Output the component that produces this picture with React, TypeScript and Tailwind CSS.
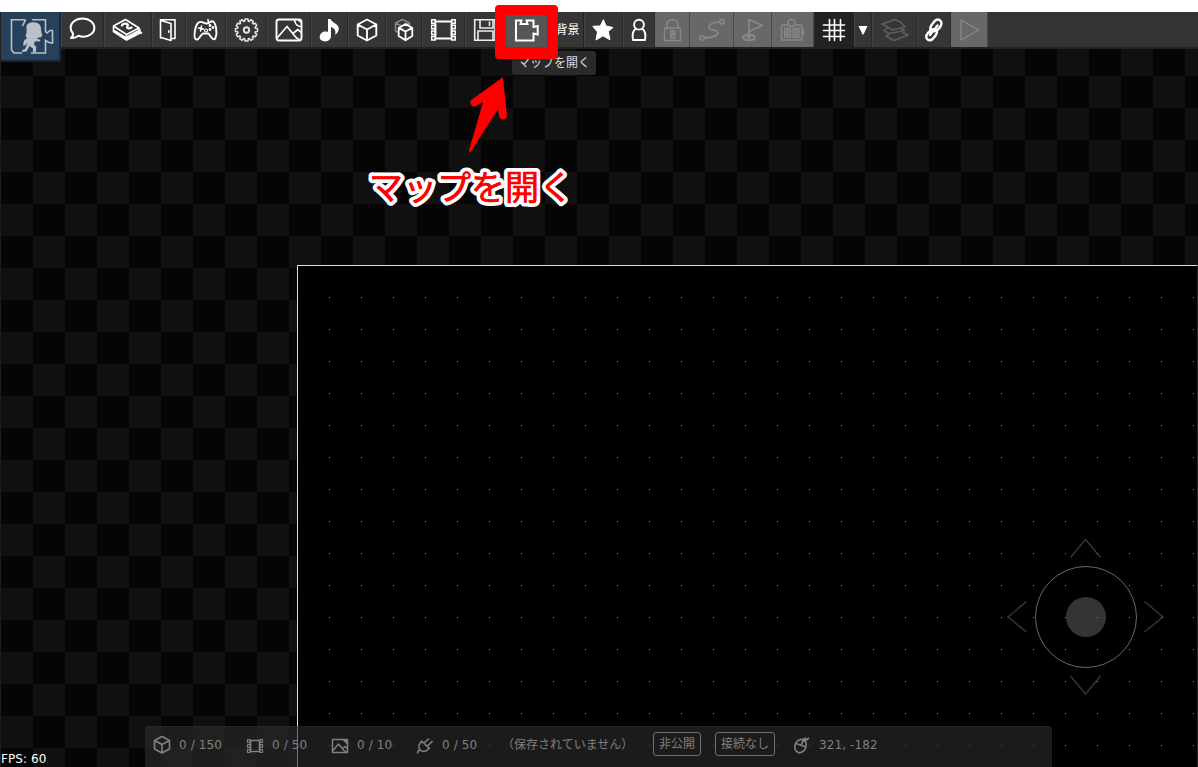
import type { ReactNode } from "react";

type ToolProps = { x: number; w: number; tone?: string; stroke?: string; children?: ReactNode };

const dark = "bg-[#363636] border-l-[#434343] border-r-[#292929]";
const off = "bg-[#686868] border-l-[#686868] border-r-[#484848]";
const active = "bg-[#222222] border-l-[#2a2a2a] border-r-[#222222]";

function Tool({ x, w, tone = dark, stroke = "#fff", children }: ToolProps) {
  return (
    <button className={`h-full shrink-0 border-x ${tone}`} style={{ width: w }}>
      <svg
        className="-ml-px block max-w-none"
        width={w}
        height={35}
        viewBox={`${x} 12 ${w} 35`}
        fill="none"
        stroke={stroke}
        strokeWidth={1.9}
        strokeLinejoin="round"
        strokeLinecap="round"
      >
        {children}
      </svg>
    </button>
  );
}

const gearOutline =
  Array.from({ length: 12 }, (_, tooth) =>
    [
      [-0.2, 9],
      [-0.13, 11.1],
      [0.13, 11.1],
      [0.2, 9],
    ]
      .map(([turn, r]) => {
        const a = (tooth / 12) * Math.PI * 2 + turn;
        return `${(246.5 + r * Math.cos(a)).toFixed(2)} ${(30 + r * Math.sin(a)).toFixed(2)}`;
      })
      .join("L"),
  )
    .join("L")
    .replace(/^/, "M") + "Z";

function Film() {
  return (
    <>
      <path d="M435.500 21.500H451.500M435.500 38.500H451.500M435.500 24V36M451.500 24V36" />
      <g strokeWidth={1.500} strokeLinejoin="miter">
        {[19.700, 25.300, 30.900, 36.500].map((y) => (
          <path key={y} d={`M431.700 ${y}h3.500v3.500h-3.500zM451.700 ${y}h3.500v3.500h-3.500z`} />
        ))}
      </g>
    </>
  );
}

function Toolbar() {
  return (
    <header className="flex h-[37px] shrink-0 border-b-2 border-[#222222] bg-[#333333] pl-[61px]">
      <Tool x={61} w={43}>
        <path strokeWidth={2} d="M71 38C73 36 73.300 34.500 73 33.500C69.500 29.500 69.800 24.500 74 21.300C78.500 17.600 86.500 17.600 91 21.300C95.500 25 95.500 31 91 34.200C87 37 82 37.200 78.500 35.800C76.500 37.500 73.500 38.200 71 38Z" />
      </Tool>
      <Tool x={104} w={48}>
        <path strokeWidth={1.700} d="M113.500 26L125.500 19.500L139 28L126.500 34.500ZM113.500 26V31.500L126.500 40L141 32.500M126.500 34.500V40M139 28V32L141.500 33M115 31L127 38.500L140 31.500M128 36.500L140 30" />
        <path strokeWidth={2.300} d="M122 25.500C123 22.500 129.500 23.500 127.500 26C126 28.500 129 29 131.500 27.500" />
      </Tool>
      <Tool x={152} w={34}>
        <path strokeWidth={1.600} d="M160.500 38V19.700H175V38.500H171.500M161 20.500L171 23.500V40.500L161 37.500" />
        <path strokeWidth={1.800} d="M168.800 31V32" />
      </Tool>
      <Tool x={186} w={40}>
        <path strokeWidth={1.900} d="M199 22.300C202 20.500 204 24 207 23.500C210 23 210.500 20.500 213 21.500C216 23 217.500 33 215.500 38C213.500 42 210.500 36 208.500 33.500H203C200 35 198.500 41.500 195.500 39C193.500 37 195 24 199 22.300Z" />
        <path strokeWidth={1.500} d="M208.500 23L208 19.500M201.500 26L200.500 31M198.500 28L203.500 29" />
        <circle cx={206} cy={30.500} r={1.500} strokeWidth={1.200} />
        <g fill="#fff" stroke="none">
          <circle cx={210} cy={25.500} r={1.400} />
          <circle cx={213} cy={27.500} r={1.400} />
          <circle cx={210} cy={29.500} r={1.400} />
        </g>
      </Tool>
      <Tool x={226} w={41} stroke="#e5e5e5">
        <path strokeWidth={1.500} d={gearOutline} />
        <circle cx={246.500} cy={30} r={2.700} />
      </Tool>
      <Tool x={267} w={44}>
        <rect x={276.500} y={19.500} width={25} height={21} rx={2.500} />
        <path d="M277.500 37.500L287 26.500L296 37.500L299 39.500M293.500 33L298 29.500L301.500 33M294.500 20C295 24 298 26.500 301.500 26.500M298.500 20L301 22" strokeWidth={1.700} />
      </Tool>
      <Tool x={311} w={37}>
        <path fill="#fff" stroke="none" d="M328 19H330.500C331 22 338 24 338.700 27.500C339.200 30.500 337.500 33.500 335 35C336.500 30.500 334 28 331 27V36C331 43 319.700 43 319.700 37C319.700 32.500 324.500 30.500 328 32Z" />
      </Tool>
      <Tool x={348} w={38}>
        <path d="M367 19.500L376.300 24.500V35.500L367 40.500L357.700 35.500V24.500ZM357.700 24.500L367 29.500L376.300 24.500M367 29.500V40.500" />
      </Tool>
      <Tool x={386} w={36}>
        <path stroke="#8a8a8a" strokeWidth={1.400} d="M402.500 19.500L409.500 23V31L402.500 34.500L395.500 31V23ZM395.500 23L402.500 26.500L409.500 23M402.500 26.500V34" />
        <path fill="#363636" strokeWidth={1.800} d="M405.500 24L412.300 28V36L405.500 40.300L398.700 36V28ZM398.700 28L405.500 31.500L412.300 28M405.500 31.500V40" />
      </Tool>
      <Tool x={422} w={43}>
        <Film />
      </Tool>
      <Tool x={465} w={40} stroke="#eeeeee">
        <path strokeWidth={1.600} strokeLinejoin="miter" d="M474.700 19.700H495V40.300H474.700ZM480 20V28H493V20M489.500 22V25.500M478 40V31H493V40" />
      </Tool>
      <Tool x={505} w={43} tone="bg-[#555555] border-l-[#292929] border-r-[#292929]">
        <path strokeWidth={2} strokeLinejoin="miter" strokeLinecap="butt" d="M516 20.500H521.500L520.500 24H527.500L526.500 20.500H533.500V27L537.700 26V34.500L533.500 33.500V40.500H516Z" />
      </Tool>
      <button className="flex h-full w-[36px] shrink-0 items-center justify-center border-r border-r-[#222222] bg-[#363636] pl-1 text-[12px] text-white">
        <span className="whitespace-nowrap">背景</span>
      </button>
      <Tool x={584} w={39}>
        <path fill="#fff" strokeWidth={1} d="M603.500 20L606 26L613 27.500L608.300 31.500L610 39.800L603 35.800L596 40L597.500 32L592.800 26.300L600 26Z" />
      </Tool>
      <Tool x={623} w={32}>
        <circle cx={639} cy={24.700} r={4.900} />
        <path d="M636 28.500C632.500 31 632.200 36 633 40H645C645.800 36 645.500 31 642 28.500" />
      </Tool>
      <Tool x={655} w={35} tone={off} stroke="#898989">
        <rect x={664.500} y={28} width={16} height={12.500} strokeWidth={1.300} />
        <path d="M667 27.500V24.500C667 18 678 18 678 24.500V27.500" strokeWidth={1.500} />
        <path d="M670.500 33C670.500 29.500 675 29.500 675 33L674 34.500L675 38H670.500L671.500 34.500ZM672.700 32V35" strokeWidth={1.400} />
      </Tool>
      <Tool x={690} w={44} tone={off} stroke="#898989">
        <circle cx={722} cy={21.700} r={2.300} strokeWidth={1.500} />
        <circle cx={702} cy={38} r={2.300} strokeWidth={1.500} />
        <path d="M719.500 22C713 22 708 25 709 28C710 31 718 29 718 33C717 37 710 37.500 704.500 38" strokeWidth={1.700} />
      </Tool>
      <Tool x={734} w={38} tone={off} stroke="#898989">
        <path d="M749 36V19.500L762.500 25.500L749 31.500" strokeWidth={1.700} />
        <ellipse cx={749} cy={37.500} rx={5.800} ry={2.700} />
        <circle cx={749} cy={37} r={1} />
      </Tool>
      <Tool x={772} w={42} tone={off} stroke="#898989">
        <rect x={781.500} y={25} width={20.500} height={15} rx={1.500} strokeWidth={1.500} />
        <circle cx={791.500} cy={22.700} r={3.500} strokeWidth={1.500} fill="#686868" />
        <path strokeWidth={1.300} d="M784.500 28.500H790.500V37H784.500ZM793 28.500H799V37H793ZM787.500 30V35.500M796 30V35.500M803.500 31V34" />
        <path strokeWidth={2.500} d="M786 31V35M789 31V35M795 31V35M798 31V35" opacity={0.500} />
      </Tool>
      <Tool x={814} w={40} tone={active}>
        <path strokeWidth={1.600} d="M829.500 19.500V40.500M834.500 19.500V40.500M840.500 19.500V40.500M823.500 25H844.500M823.500 30.500H844.500M823.500 36.500H844.500" />
      </Tool>
      <Tool x={854} w={18}>
        <path fill="#fff" stroke="none" d="M858.500 26H867.500L863.500 34.500H862.500Z" />
      </Tool>
      <Tool x={872} w={45} stroke="#5d5d5d">
        <path strokeWidth={1.600} d="M882 24L895 19.500L901 22.500L905 27L892 30L887 26.500ZM887 28L884 30.500L889 33.500L904.500 30.500L901 28.500M889 34.500L886 36L894 40.500L908 35L903 32.500" />
      </Tool>
      <Tool x={917} w={34}>
        <g strokeWidth={2.400}>
          <path d="M932 31C928.500 29 931 25.500 933.500 22.500C936 18.500 939 19 941 21.500C942.500 24 940.500 27 938 29.500C936 31.500 934 31.500 932 31M935 29L937.500 25.500" />
          <path d="M935 29.500C938.500 31.500 936.500 34.500 934 37.500C931.500 41 928.500 41 926.700 38.500C925.500 36 927.500 33 930 31C932 29 933.500 29 935 29.500M932.500 31.500L930 35" />
        </g>
      </Tool>
      <Tool x={951} w={37} tone={off} stroke="#898989">
        <path strokeWidth={1.300} d="M961 20V40L978.500 30Z" />
      </Tool>
    </header>
  );
}

function Logo() {
  return (
    <div className="absolute left-0 top-3 h-[50px] w-[61px] border-b-2 border-l border-r-2 border-b-[#162536] border-l-[#202020] border-r-[#182a3d] bg-[#27405b]">
      <svg width="58" height="48" viewBox="1 12 58 48" fill="none" stroke="#b9c0ca" strokeWidth="1.600">
        <path d="M25.500 19.800H11.500V50L14 53H22M25.500 19.800L22.500 26M32 19.800H45.500V31.500L47 33L50 30.500H52.500V43L49 42.500L45.500 40.500V53H31" />
        <g fill="#b9c0ca" stroke="none">
          <path d="M26.500 28C26 23.500 30 22 34 22.200C39.500 22.500 41.500 26 41 30.500L42.300 35.500L40.500 37.500L38 37.500L36.500 39.500L30 38L27 38L25.500 36L26.500 33Z" />
          <path d="M29.500 36L35.500 36L36 38.500L40.300 39.800L40 41.500L35 41.300L34 44.500L36.300 47L35.800 52.500L32.800 52.500L33 48.500L29.500 46L26.500 51.500L22 52L22.300 50L25 49L27.500 43L25 45.500L23 45.500L24 40.500L28 37.500Z" />
        </g>
      </svg>
    </div>
  );
}

function Stage() {
  return (
    <main className="flex flex-1 border-l border-l-[#1c1c1c] bg-[repeating-conic-gradient(#101010_0_25%,#050505_0_50%)] bg-[length:64px_64px] bg-[position:0_-5px] pl-[296px] pt-[216px]">
      <div className="flex-1 border-l border-r border-t border-l-[#dedede] border-r-[#242424] border-t-[#dedede] bg-black">
        <svg className="block" width="899" height="501" viewBox="298 266 899 501">
          <defs>
            <pattern id="grid-dots" x="329" y="297" width="32" height="32" patternUnits="userSpaceOnUse">
              <rect width="1" height="1" fill="#858585" />
            </pattern>
          </defs>
          <g fill="none" stroke="#343434" strokeWidth="1.500">
            <circle cx="1086" cy="617" r="50.500" stroke="#686868" strokeWidth="1" />
            <circle cx="1086" cy="617" r="20" fill="#343434" stroke="none" />
            <path d="M1070.500 557.500L1085.500 539.500L1100.500 557.500M1070.500 676L1085.500 694L1100.500 676M1026.500 601.500L1008 617L1026.500 632M1144.500 601.500L1163 617L1144.500 632" />
          </g>
          <rect x="298" y="266" width="899" height="501" fill="url(#grid-dots)" />
        </svg>
      </div>
    </main>
  );
}

function StatusIcon({ children, className }: { children: ReactNode; className: string }) {
  return (
    <svg className={`shrink-0 ${className}`} width="18" height="20" viewBox="0 0 18 20" fill="none" stroke="#808080" strokeWidth="1.600" strokeLinejoin="round">
      {children}
    </svg>
  );
}

function StatusBar() {
  return (
    <footer className="absolute bottom-0 left-[145px] flex h-[41px] w-[907px] items-center rounded-t-[3px] border-t border-[#777777]/10 bg-[#2d2d2d]/60 pb-[4px] pl-2 text-[12px] tracking-[0.1px] text-[#808080]">
      <StatusIcon className="mr-2">
        <path d="M9 1.500L16.500 5.500V14L9 18L1.500 14V5.500ZM1.500 5.500L9 9.500L16.500 5.500M9 9.500V18" />
      </StatusIcon>
      <span className="w-[67px] whitespace-nowrap">0 / 150</span>
      <StatusIcon className="mr-2">
        <path d="M4 5.500H14M4 16.500H14M4.500 5V17M13.500 5V17" />
        <path strokeWidth="1.200" d="M1.500 4.500H4V7.500H1.500ZM1.500 9.500H4V12.500H1.500ZM1.500 14.500H4V17.500H1.500ZM14 4.500H16.500V7.500H14ZM14 9.500H16.500V12.500H14ZM14 14.500H16.500V17.500H14Z" />
      </StatusIcon>
      <span className="w-[59px] whitespace-nowrap">0 / 50</span>
      <StatusIcon className="mr-2">
        <path strokeWidth="1.500" d="M1.500 4.500H16.500V17.500H1.500ZM2 15.500L7.500 9L13 15.500L16 17.500M11.500 13.500L14 11.500L16 13.500M12 4.500L16 8.500M14 4.500L16 6.500" />
      </StatusIcon>
      <span className="w-[59px] whitespace-nowrap">0 / 10</span>
      <StatusIcon className="mr-2">
        <path d="M6 6.500L13 13C11 16.500 7 17.500 4 15C2 12 3 8.500 6 6.500ZM5 5.500L14 14M8 8L13 3.500M11.500 11L16.500 6M4 15C2 15.500 1.500 17 1.500 18.500" />
      </StatusIcon>
      <span className="w-[60px] whitespace-nowrap">0 / 50</span>
      <span className="w-[151px] whitespace-nowrap tracking-normal">（保存されていません）</span>
      <span className="mb-[3px] mr-[14px] flex h-6 w-[48px] shrink-0 items-center justify-center rounded-[3px] border border-[#707070] tracking-normal">非公開</span>
      <span className="mb-[3px] mr-[18px] flex h-6 w-[60px] shrink-0 items-center justify-center whitespace-nowrap rounded-[3px] border border-[#707070] tracking-normal">接続なし</span>
      <StatusIcon className="mr-2">
        <ellipse cx="7.500" cy="11" rx="5.500" ry="6.800" transform="rotate(25 7.500 11)" />
        <path d="M3 8.500L13 12M8 10.500L10.500 4.500M10.500 4.500L12 3L13 5L16 3M10.500 6L15 4.500" />
      </StatusIcon>
      <span className="whitespace-nowrap">321, -182</span>
    </footer>
  );
}

function Callout() {
  return (
    <>
      <div className="absolute left-[512px] top-[51px] flex h-6 w-[84px] items-center justify-center rounded-[3px] bg-[#2a2a2a] text-[12px] text-[#dddddd]">
        マップを開く
      </div>
      <div className="absolute left-[495px] top-[5px] h-[54px] w-[63px] rounded-[4px] border-x-[11px] border-b-[12px] border-t-[10px] border-[#ff0000]" />
      <svg className="absolute left-[460px] top-[70px]" width="60" height="90" viewBox="460 70 60 90">
        <path fill="#ff0000" d="M503 77L507 116C506 120.500 500 120.500 499 116L498 109L471 151.500Q469 153 469 150.500L483 102L476 106C471 108 468.500 102 472 99.500Z" />
      </svg>
      <svg className="absolute left-[360px] top-[160px]" width="220" height="54" viewBox="360 160 220 54">
        <text
          x="369"
          y="199.500"
          className="text-[34px] font-normal"
          fill="#ff0000"
          stroke="#ffffff"
          strokeWidth="8"
          strokeLinejoin="round"
          paintOrder="stroke"
        >
          マップを開く
        </text>
        <text x="369" y="199.500" className="text-[34px] font-normal" fill="#ff0000" stroke="#ff0000" strokeWidth="0.500" aria-hidden="true">
          マップを開く
        </text>
      </svg>
    </>
  );
}

export default function App() {
  return (
    <div className="relative flex h-[767px] w-[1198px] flex-col overflow-hidden bg-white pt-3 font-['DejaVu_Sans','Noto_Sans_CJK_JP',sans-serif]">
      <Toolbar />
      <Stage />
      <Logo />
      <StatusBar />
      <div className="absolute -bottom-px left-px text-[12px] leading-[17px] tracking-[0.1px] text-white">FPS: 60</div>
      <Callout />
    </div>
  );
}
